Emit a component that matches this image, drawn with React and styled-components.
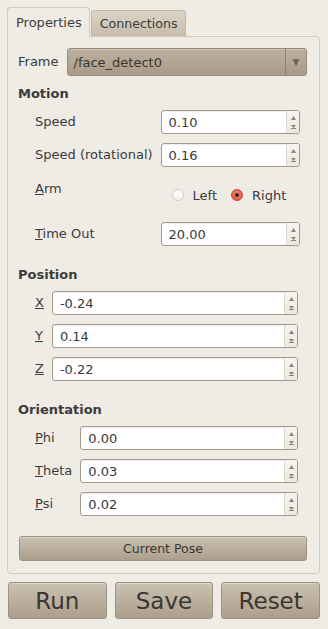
import styled, { createGlobalStyle } from "styled-components";

const GlobalStyle = createGlobalStyle`
    html, body {
        margin: 0;
        padding: 0;
        background: #efebe5;
    }
    body {
        font-family: "DejaVu Sans", "Liberation Sans", sans-serif;
        font-size: 13px;
        color: #3c3c3c;
    }
`;

const Page = styled.div`
    width: 328px;
    height: 629px;
    box-sizing: border-box;
    padding: 7px 8px 0 7px;
    display: flex;
    flex-direction: column;
`;

const TabBar = styled.div`
    display: flex;
    align-items: flex-end;
    height: 30px;
    position: relative;
    z-index: 1;
    margin-bottom: -1px;
`;

const Tab = styled.div`
    box-sizing: border-box;
    height: ${(p) => (p.$active ? "30px" : "27px")};
    padding: 0 7px 0 8px;
    display: flex;
    align-items: center;
    padding-bottom: ${(p) => (p.$active ? "1px" : "0")};
    border: 1px solid ${(p) => (p.$active ? "#d3cabb" : "#c2b7a5")};
    border-bottom: ${(p) => (p.$active ? "none" : "1px solid #d3cabb")};
    border-radius: 4px 4px 0 0;
    background: ${(p) =>
        p.$active ? "#efebe5" : "linear-gradient(#dcd3c5, #c8bdab)"};
    color: #3c3c3c;
    font-size: ${(p) => (p.$active ? "13px" : "12.6px")};
    margin-left: ${(p) => (p.$active ? "0" : "1px")};
`;

const Panel = styled.div`
    box-sizing: border-box;
    height: 538px;
    border: 1px solid #d3cabb;
    border-radius: 0 4px 4px 4px;
    padding: 11px 12px 12px 10px;
    display: flex;
    flex-direction: column;
`;

const FrameRow = styled.div`
    display: flex;
    align-items: center;
    gap: 8px;
    height: 28px;
`;

const Combo = styled.div`
    flex: 1;
    height: 28px;
    box-sizing: border-box;
    display: flex;
    border: 1px solid #968a78;
    border-radius: 3px;
    background: linear-gradient(#bdb09e, #a89b88);
    box-shadow: inset 0 1px 0 rgba(255, 255, 255, 0.25);
`;

const ComboText = styled.div`
    flex: 1;
    padding-left: 6px;
    display: flex;
    align-items: center;
    color: #3a3630;
`;

const ComboArrow = styled.div`
    width: 20px;
    border-left: 1px solid #8f8371;
    display: flex;
    align-items: center;
    justify-content: center;
    color: #6a6257;
    font-size: 9px;
`;

const Heading = styled.div`
    font-weight: bold;
    line-height: 18px;
    height: 18px;
    margin-top: ${(p) => p.$top || 20}px;
`;

const Section = styled.div`
    display: grid;
    grid-template-columns: auto 1fr;
    column-gap: 8px;
    row-gap: 9px;
    margin-top: 7px;
    padding: 0 9px 0 17px;
`;

const Label = styled.div`
    display: flex;
    align-items: ${(p) => (p.$top ? "flex-start" : "center")};
    padding-top: ${(p) => (p.$top ? "4px" : "0")};
    line-height: 18px;
    white-space: nowrap;
`;

const Spin = styled.div`
    height: 24px;
    box-sizing: border-box;
    display: flex;
    border: 1px solid #a59a88;
    border-radius: 3px;
    background: #fff;
    box-shadow: inset 0 1px 1px rgba(0, 0, 0, 0.08);
`;

const SpinValue = styled.div`
    flex: 1;
    padding-left: 7px;
    display: flex;
    align-items: center;
    color: #3a3a3a;
`;

const SpinButtons = styled.div`
    width: 12px;
    border-left: 1px solid #ddd7cc;
    background: linear-gradient(#f7f5f1, #ebe7df);
    border-radius: 0 2px 2px 0;
    display: flex;
    flex-direction: column;
    align-items: center;
    justify-content: space-between;
    padding: 5px 0 4px;
`;

const RadioRow = styled.div`
    height: 37px;
    display: flex;
    align-items: flex-start;
    padding: 10px 0 0 11px;
    box-sizing: border-box;
`;

const RadioOption = styled.label`
    display: flex;
    align-items: center;
    height: 18px;
    margin-right: 14px;
    gap: 9px;
`;

const RadioDot = styled.span`
    width: 12px;
    height: 12px;
    box-sizing: border-box;
    border-radius: 50%;
    border: 1px solid ${(p) => (p.$checked ? "#c9452f" : "#cfc8bd")};
    background: ${(p) =>
        p.$checked
            ? "radial-gradient(circle at 50% 40%, #f58b73, #dd4a31)"
            : "linear-gradient(#ffffff, #f4f2ee)"};
    display: flex;
    align-items: center;
    justify-content: center;
    &::after {
        content: "";
        width: 4px;
        height: 4px;
        border-radius: 50%;
        background: #3b2621;
        display: ${(p) => (p.$checked ? "block" : "none")};
    }
`;

const Button = styled.button`
    box-sizing: border-box;
    border: 1px solid #9d917f;
    border-radius: 3px;
    background: linear-gradient(#cbc1b1, #ab9f8c);
    box-shadow: inset 0 1px 0 rgba(255, 255, 255, 0.3);
    color: #3a3733;
    font-family: "DejaVu Sans", "Liberation Sans", sans-serif;
    font-size: ${(p) => (p.$big ? "23px" : "12.5px")};
    height: ${(p) => (p.$big ? "37px" : "25px")};
    padding: 0;
    cursor: pointer;
`;

const PoseButton = styled(Button)`
    margin: 20px 0 0 1px;
`;

const ButtonRow = styled.div`
    display: grid;
    grid-template-columns: repeat(3, 1fr);
    gap: 8px;
    margin: 8px 0 0 1px;
`;

const SpinBox = ({ value }) => (
    <Spin>
        <SpinValue>{value}</SpinValue>
        <SpinButtons>
            <svg width="5" height="4" viewBox="0 0 5 4">
                <path d="M2.5 0 L5 4 L0 4 Z" fill="#8c8477" />
            </svg>
            <svg width="5" height="4" viewBox="0 0 5 4">
                <path d="M0 0 L5 0 L2.5 3 Z" fill="#8c8477" />
                <rect x="0" y="3" width="5" height="1" fill="#8c8477" />
            </svg>
        </SpinButtons>
    </Spin>
);

const Row = ({ label, value }) => (
    <>
        <Label>{label}</Label>
        <SpinBox value={value} />
    </>
);

export default function App() {
    return (
        <Page>
            <GlobalStyle />
            <TabBar>
                <Tab $active>Properties</Tab>
                <Tab>Connections</Tab>
            </TabBar>
            <Panel>
                <FrameRow>
                    <Label>Frame</Label>
                    <Combo>
                        <ComboText>/face_detect0</ComboText>
                        <ComboArrow>▼</ComboArrow>
                    </Combo>
                </FrameRow>

                <Heading $top={9}>Motion</Heading>
                <Section>
                    <Row label="Speed" value="0.10" />
                    <Row label="Speed (rotational)" value="0.16" />
                    <Label $top><span><u>A</u>rm</span></Label>
                    <RadioRow>
                        <RadioOption>
                            <RadioDot />
                            Left
                        </RadioOption>
                        <RadioOption>
                            <RadioDot $checked />
                            Right
                        </RadioOption>
                    </RadioRow>
                    <Row label={<span><u>T</u>ime Out</span>} value="20.00" />
                </Section>

                <Heading>Position</Heading>
                <Section>
                    <Row label={<u>X</u>} value="-0.24" />
                    <Row label={<u>Y</u>} value="0.14" />
                    <Row label={<u>Z</u>} value="-0.22" />
                </Section>

                <Heading>Orientation</Heading>
                <Section>
                    <Row label={<span><u>P</u>hi</span>} value="0.00" />
                    <Row label={<span><u>T</u>heta</span>} value="0.03" />
                    <Row label={<span><u>P</u>si</span>} value="0.02" />
                </Section>

                <PoseButton>Current Pose</PoseButton>
            </Panel>
            <ButtonRow>
                <Button $big>Run</Button>
                <Button $big>Save</Button>
                <Button $big>Reset</Button>
            </ButtonRow>
        </Page>
    );
}
